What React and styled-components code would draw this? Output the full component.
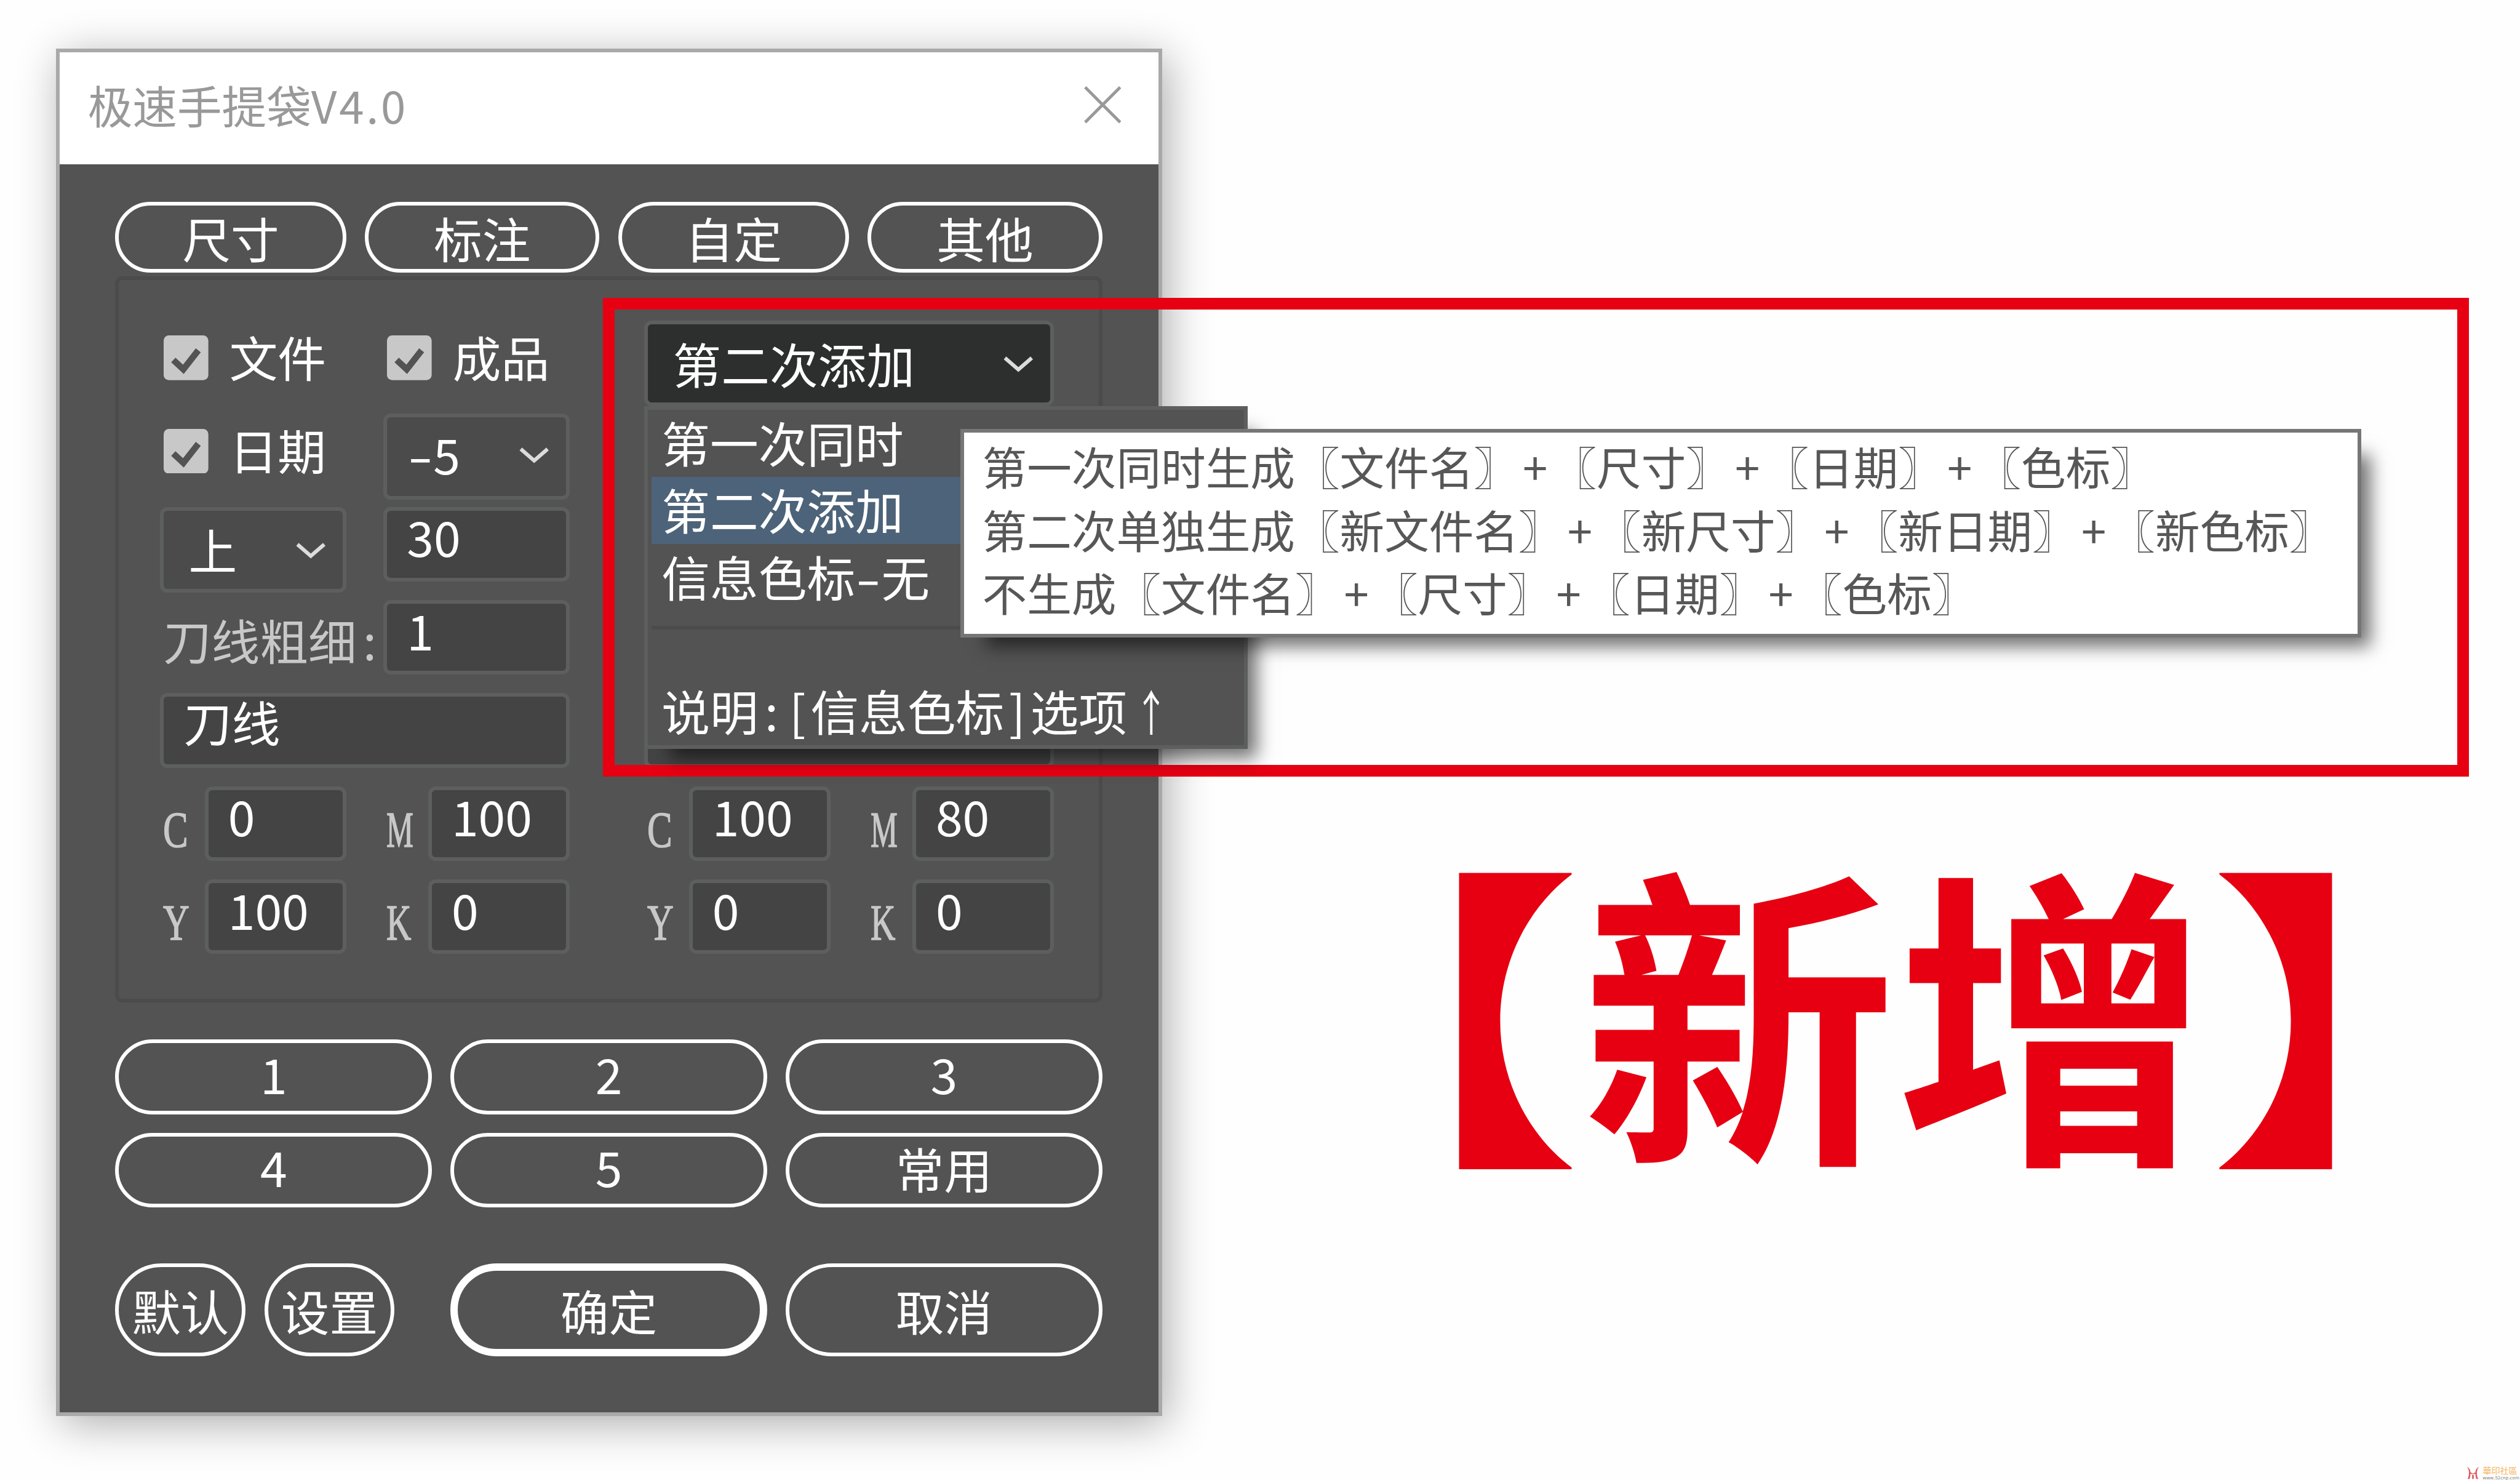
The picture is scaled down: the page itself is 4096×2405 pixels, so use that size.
import React from "react";
import styled, { createGlobalStyle } from "styled-components";

// one dialog pixel, enlarged
const PX = 6.0534;
const u = (n) => `${(n * PX).toFixed(2)}px`;

const RED = "#e60012";
const PANEL = "#535353";
const LINE = "#5d5f5e";
const FIELD = "#444444";
const LABEL = "#c8c8c8";

const GlobalStyle = createGlobalStyle`
  * {
    box-sizing: border-box;
  }
  body {
    margin: 0;
    background: #fefefe;
    font-family: "Noto Sans CJK SC", "Liberation Sans", sans-serif;
    overflow: hidden;
  }
`;

const Page = styled.main`
  position: relative;
  width: 4096px;
  height: 2405px;
  overflow: hidden;
  background: #fefefe;
`;

const Dialog = styled.section`
  position: absolute;
  left: 90.7px;
  top: 79.4px;
  width: ${u(297)};
  height: ${u(367)};
  border: ${u(1)} solid #a9a9a9;
  background: ${PANEL};
  box-shadow: ${u(1.5)} ${u(2.2)} ${u(11)} rgba(0, 0, 0, 0.32);
`;

const TitleBar = styled.header`
  height: ${u(30)};
  padding: 0 ${u(10)} ${u(1.8)} ${u(7.6)};
  display: flex;
  align-items: center;
  justify-content: space-between;
  background: #ffffff;
  color: #999999;
  font-size: ${u(12)};
  line-height: ${u(16)};
`;

const Version = styled.span`
  letter-spacing: ${u(0.6)};
`;

const Client = styled.div`
  padding: ${u(10)} ${u(15)} 0;
  color: #ffffff;
  font-size: ${u(13)};
  line-height: ${u(16)};
`;

const ButtonRow = styled.div`
  display: flex;
  gap: ${u(5)};
  margin-top: ${(p) => u(p.$top || 0)};
`;

const Pill = styled.button`
  width: ${(p) => u(p.$w)};
  height: ${(p) => u(p.$h)};
  margin: 0 ${(p) => u(p.$after || 0)} 0 0;
  padding: ${(p) => u(p.$drop || 0)} 0 ${(p) => u(p.$lift || 0)};
  display: flex;
  align-items: center;
  justify-content: center;
  flex: none;
  border: ${(p) => u(p.$bold ? 2 : 1)} solid #ffffff;
  border-radius: ${u(13)};
  background: transparent;
  color: inherit;
  font: inherit;
  white-space: nowrap;
`;

const Group = styled.div`
  height: ${u(195)};
  margin-top: ${u(1)};
  padding: ${u(11)};
  display: flex;
  gap: ${u(20)};
  border: ${u(1)} solid #4b4b4b;
  border-radius: ${u(2)};
`;

const Column = styled.div`
  width: ${u(110)};
  display: grid;
  grid-auto-rows: ${u(25)};
  flex: none;
`;

const Row = styled.div`
  position: relative;
  display: grid;
  grid-template-columns: ${u(60)} ${u(50)};
  align-items: start;
`;

const WideRow = styled(Row)`
  grid-template-columns: ${u(110)};
`;

const CheckLabel = styled.label`
  height: ${u(12)};
  margin: ${u(4)} 0 0 ${u(1)};
  display: flex;
  align-items: center;
  gap: ${u(5.6)};
  white-space: nowrap;

  span {
    margin-top: -${u(0.8)};
  }
`;

const CheckBox = styled.svg`
  width: ${u(12)};
  height: ${u(12)};
  flex: none;
`;

const Select = styled.div`
  width: ${(p) => u(p.$w)};
  height: ${u(23)};
  padding: 0 ${u(4)} ${(p) => u(p.$lift || 0)} ${(p) => u(p.$left || 6.7)};
  display: flex;
  align-items: center;
  justify-content: space-between;
  border: ${u(1)} solid ${LINE};
  border-radius: ${u(2)};
  background: ${(p) => (p.$open ? "#2d2f2e" : "#4b4b4b")};
  white-space: nowrap;
`;

const Chevron = styled.svg`
  width: ${u(9)};
  height: ${u(5)};
  flex: none;
`;

const Field = styled.div`
  width: ${(p) => u(p.$w)};
  height: ${u(20)};
  padding: 0 0 ${(p) => u(p.$lift || 4.2)} ${u(5.3)};
  display: flex;
  align-items: center;
  border: ${u(1)} solid ${LINE};
  border-radius: ${u(2)};
  background: ${FIELD};
`;

const Caption = styled.span`
  padding: ${u(2.7)} 0 0 ${u(0.8)};
  color: ${LABEL};
  white-space: nowrap;
`;

const InkCell = styled.div`
  display: flex;
  align-items: flex-start;
`;

const InkName = styled.span`
  width: ${u(12)};
  height: ${u(20)};
  padding-left: ${u(0.8)};
  color: ${LABEL};
  font-family: "Liberation Serif", serif;
  font-size: ${u(13.6)};
  line-height: ${u(23.4)};
  -webkit-text-stroke: 1.5px ${LABEL};
`;

const Narrow = styled.span`
  display: inline-block;
  transform: scaleX(${(p) => p.$x});
  transform-origin: left;
`;

// half-width cell for punctuation
const Half = styled.span`
  display: inline-block;
  width: ${(p) => u(p.$w || 7)};
  text-align: center;
`;

const Dash = styled(Half)`
  transform: scaleX(1.5);
`;

const UpArrow = styled(Half)`
  transform: scaleX(0.7);
`;

const Menu = styled.div`
  position: absolute;
  left: 0;
  top: ${u(23)};
  z-index: 2;
  width: ${u(162)};
  height: ${u(92)};
  padding: 0 ${u(1)};
  border: ${u(1)} solid ${LINE};
  background: ${PANEL};
  box-shadow: ${u(4.7)} ${u(4.7)} ${u(4.5)} -${u(2.3)} rgba(0, 0, 0, 0.55);
`;

const MenuItem = styled.div`
  height: ${u(18)};
  padding: 0 0 ${u(0.7)} ${u(2.7)};
  display: flex;
  align-items: center;
  background: ${(p) => (p.$active ? "#4d6379" : "transparent")};
  white-space: nowrap;
`;

const Separator = styled.div`
  height: ${u(14)};
  margin-top: ${u(4)};
  border-top: ${u(1)} solid #4b4b4b;
`;

const Tooltip = styled.div`
  position: absolute;
  left: ${u(84)};
  top: ${u(5)};
  width: ${u(376)};
  height: ${u(56)};
  padding: ${u(0.5)} 0 0 ${u(4.8)};
  border: ${u(1)} solid #767676;
  background: #ffffff;
  color: #575757;
  font-size: ${u(12)};
  line-height: ${u(17)};
  white-space: nowrap;
  text-spacing-trim: space-all;
  box-shadow: ${u(4.7)} ${u(4.7)} ${u(4.5)} -${u(2.3)} rgba(0, 0, 0, 0.55);
`;

const Highlight = styled.div`
  position: absolute;
  left: 980px;
  top: 484.4px;
  width: 3033px;
  height: 777.6px;
  border: 19px solid ${RED};
`;

const Badge = styled.h1`
  position: absolute;
  left: 2281px;
  top: 1281px;
  width: 1600px;
  margin: 0;
  color: ${RED};
  font-size: 510px;
  font-weight: 700;
  font-feature-settings: "halt" 1;
  line-height: 700px;
  text-align: center;
  white-space: nowrap;
`;

const Bracket = styled.span`
  display: inline-block;
  transform: scaleX(1.15);
  transform-origin: ${(p) => p.$from};
`;

const Watermark = styled.footer`
  position: absolute;
  right: 1px;
  bottom: 0;
  display: flex;
  align-items: center;
  gap: 4px;

  svg {
    width: 23px;
    height: 21px;
  }
`;

const SiteName = styled.div`
  color: #f8b25c;
  font: 14px / 15px "Noto Sans CJK TC", sans-serif;
`;

const SiteUrl = styled.div`
  color: #777777;
  font: 7.4px / 8px "Open Sans", sans-serif;
  letter-spacing: 0.2px;
`;

const Arrow = () => (
  <Chevron viewBox="0 0 9 5">
    <path d="M0.9 1.1 L4.5 4.2 L8.1 1.1" fill="none" stroke="#dcdcdc" strokeWidth="1" />
  </Chevron>
);

const Check = ({ children }) => (
  <CheckLabel>
    <CheckBox viewBox="0 0 12 12">
      <rect width="12" height="12" rx="1.4" fill={LABEL} />
      <path d="M2.6 6.6 L5.3 9.1 L9.3 4" fill="none" stroke={PANEL} strokeWidth="1.7" />
    </CheckBox>
    <span>{children}</span>
  </CheckLabel>
);

const SQUEEZE = { C: 0.74, M: 0.6, Y: 0.72, K: 0.68 };

const Ink = ({ name, value }) => (
  <InkCell>
    <InkName>
      <Narrow $x={SQUEEZE[name]}>{name}</Narrow>
    </InkName>
    <Field $w={38}>{value}</Field>
  </InkCell>
);

const InkRows = ({ c, m, y, k }) => (
  <>
    <Row>
      <Ink name="C" value={c} />
      <Ink name="M" value={m} />
    </Row>
    <Row>
      <Ink name="Y" value={y} />
      <Ink name="K" value={k} />
    </Row>
  </>
);

const TipLine = ({ lead, parts }) => (
  <div>
    {lead}
    {parts.map((part, i) => (
      <React.Fragment key={part}>
        {i > 0 && <Half $w={9}>+</Half>}〖{part}〗
      </React.Fragment>
    ))}
  </div>
);

const OptionMenu = () => (
  <Menu>
    <MenuItem>第一次同时</MenuItem>
    <MenuItem $active>第二次添加</MenuItem>
    <MenuItem>
      信息色标<Dash>-</Dash>无
    </MenuItem>
    <Separator />
    <MenuItem>
      说明<Half>:</Half>
      <Half>[</Half>信息色标<Half>]</Half>选项<UpArrow $w={13}>↑</UpArrow>
    </MenuItem>
    <Tooltip>
      <TipLine lead="第一次同时生成" parts={["文件名", "尺寸", "日期", "色标"]} />
      <TipLine lead="第二次单独生成" parts={["新文件名", "新尺寸", "新日期", "新色标"]} />
      <TipLine lead="不生成" parts={["文件名", "尺寸", "日期", "色标"]} />
    </Tooltip>
  </Menu>
);

const App = () => {
  return (
    <Page>
      <GlobalStyle />
      <Dialog>
        <TitleBar>
          <span>
            极速手提袋<Version>V4.0</Version>
          </span>
          <svg width={u(10)} height={u(10)} viewBox="0 0 10 10">
            <path d="M0.3 0.3 L9.7 9.7 M9.7 0.3 L0.3 9.7" stroke="#999999" strokeWidth="0.8" />
          </svg>
        </TitleBar>
        <Client>
          <ButtonRow>
            <Pill $w={62} $h={19} $drop={0.4}>尺寸</Pill>
            <Pill $w={63} $h={19} $drop={0.4}>标注</Pill>
            <Pill $w={62} $h={19} $drop={0.4}>自定</Pill>
            <Pill $w={63} $h={19} $drop={0.4}>其他</Pill>
          </ButtonRow>
          <Group>
            <Column>
              <Row>
                <Check>文件</Check>
                <Check>成品</Check>
              </Row>
              <Row>
                <Check>日期</Check>
                <Select $w={50} $lift={1.4} $left={5.4}>
                  <span>
                    <Dash>-</Dash>5
                  </span>
                  <Arrow />
                </Select>
              </Row>
              <Row>
                <Select $w={50} $lift={0.2}>
                  上<Arrow />
                </Select>
                <Field $w={50}>30</Field>
              </Row>
              <Row>
                <Caption>
                  刀线粗细<Half>:</Half>
                </Caption>
                <Field $w={50}>1</Field>
              </Row>
              <WideRow>
                <Field $w={110} $lift={4.8}>刀线</Field>
              </WideRow>
              <InkRows c="0" m="100" y="100" k="0" />
            </Column>
            <Column>
              <WideRow>
                <Select $w={110} $open $lift={0.2}>
                  第二次添加
                  <Arrow />
                </Select>
                <OptionMenu />
              </WideRow>
              <WideRow />
              <WideRow />
              <WideRow />
              <WideRow>
                <Field $w={110} />
              </WideRow>
              <InkRows c="100" m="80" y="0" k="0" />
            </Column>
          </Group>
          <ButtonRow $top={10}>
            <Pill $w={85} $h={20} $lift={2}>1</Pill>
            <Pill $w={85} $h={20} $lift={2}>2</Pill>
            <Pill $w={85} $h={20} $lift={2}>3</Pill>
          </ButtonRow>
          <ButtonRow $top={5}>
            <Pill $w={85} $h={20} $lift={2}>4</Pill>
            <Pill $w={85} $h={20} $lift={2}>5</Pill>
            <Pill $w={85} $h={20} $lift={0.8}>常用</Pill>
          </ButtonRow>
          <ButtonRow $top={15}>
            <Pill $w={35} $h={25} $drop={0.3}>默认</Pill>
            <Pill $w={35} $h={25} $drop={0.3} $after={10}>设置</Pill>
            <Pill $w={85} $h={25} $drop={0.3} $bold>确定</Pill>
            <Pill $w={85} $h={25} $drop={0.3}>取消</Pill>
          </ButtonRow>
        </Client>
      </Dialog>
      <Highlight />
      <Badge>
        <Bracket $from="right">【</Bracket>新增<Bracket $from="left">】</Bracket>
      </Badge>
      <Watermark>
        <svg viewBox="0 0 34 31">
          <path
            d="M2 1 C9 6 9 22 4 30 H9 C10 27 11 22 11 18 H23 C23 22 24 27 25 30 H30 C25 22 25 6 32 1 C26 3 23 8 23 14 L17 17 L11 14 C11 8 8 3 2 1 Z M15 20 H19 V30 H15 Z"
            fill="#de5b60"
          />
        </svg>
        <div>
          <SiteName>華印社區</SiteName>
          <SiteUrl>www.52cnp.com</SiteUrl>
        </div>
      </Watermark>
    </Page>
  );
};

export default App;
